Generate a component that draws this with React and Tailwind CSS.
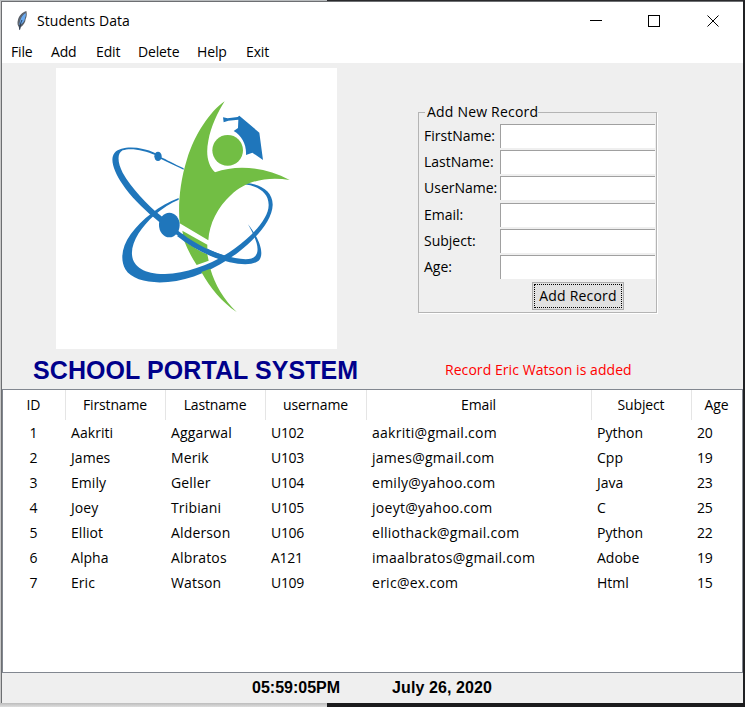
import React from 'react';

const menu = [
  ['File', 'w-[40px]'],
  ['Add', 'w-[45px]'],
  ['Edit', 'w-[42px]'],
  ['Delete', 'w-[59px]'],
  ['Help', 'w-[49px]'],
  ['Exit', 'w-[40px]'],
];
const fields = ['FirstName:', 'LastName:', 'UserName:', 'Email:', 'Subject:', 'Age:'];
const columns = ['ID', 'Firstname', 'Lastname', 'username', 'Email', 'Subject', 'Age'];
const rows = [
  ['1', 'Aakriti', 'Aggarwal', 'U102', 'aakriti@gmail.com', 'Python', '20'],
  ['2', 'James', 'Merik', 'U103', 'james@gmail.com', 'Cpp', '19'],
  ['3', 'Emily', 'Geller', 'U104', 'emily@yahoo.com', 'Java', '23'],
  ['4', 'Joey', 'Tribiani', 'U105', 'joeyt@yahoo.com', 'C', '25'],
  ['5', 'Elliot', 'Alderson', 'U106', 'elliothack@gmail.com', 'Python', '22'],
  ['6', 'Alpha', 'Albratos', 'A121', 'imaalbratos@gmail.com', 'Adobe', '19'],
  ['7', 'Eric', 'Watson', 'U109', 'eric@ex.com', 'Html', '15'],
];
const grid = 'grid grid-cols-[62px_100px_100px_101px_225px_100px_51px]';
const cell = [
  'pr-[1px] text-center',
  'pl-[6px] tracking-[0.05px]',
  'pl-[6px] tracking-[0.15px]',
  'pl-[6px] tracking-[-0.3px]',
  'pl-[6px] tracking-[0.27px]',
  'pl-[6px] tracking-[0px]',
  'pl-[6px] tracking-[-0.3px]',
];

function Feather() {
  return (
    <svg className="h-[20px] w-[12px]" viewBox="0 0 36 60">
      <path d="M31 1 C20 3 10 13 6 26 C3 35 5 43 8 47 L11 58 L14 49 C23 42 28 34 29 24 C33 17 33 8 31 1Z" fill="#555d67" />
      <path d="M29 6 C19 11 12 24 10 42 C20 38 27 28 27 20 C30 15 30 11 29 6Z" fill="#69a9ee" />
      <path d="M18 27 C14 35 12 42 11 56" stroke="#1a2b44" strokeWidth="2.5" fill="none" />
      <path d="M31 2 C18 9 9 23 7 42" stroke="#6b7078" strokeWidth="2" fill="none" />
    </svg>
  );
}

function Logo() {
  return (
    <svg className="h-[281px] w-[281px] bg-white" viewBox="-133 -67 843 843">
      {/* upper orbit */}
      <path fill="#1f76bb" fillRule="evenodd" d="M250 234 C220 220 197 207 181 200 L164 188 C120 168 65 165 43 187 C27 206 41 243 66 281 C89 316 128 355 160 381 L190 406 L229 433 C277 471 337 503 388 516 C429 525 463 524 477 509 C492 488 478 446 443 402 C466 442 481 478 465 497 C451 514 408 505 371 495 C318 479 264 445 231 420 L180 375 C141 344 92 292 67 247 C52 217 49 190 67 180 C91 171 133 180 165 194 L182 206 C208 218 230 229 250 238Z" />
      {/* lower orbit */}
      <path fill="#1f76bb" fillRule="evenodd" d="M235 323 C178 344 124 387 91 432 C64 469 59 508 75 537 C94 569 148 580 203 575 C273 570 353 533 416 484 C471 441 516 388 517 344 C518 304 483 281 435 277 L431 282 C472 286 505 306 505 344 C505 385 457 435 402 475 C344 518 264 549 194 551 C136 552 98 531 95 493 C92 455 123 409 163 374 C187 353 211 337 235 328Z" />
      <ellipse cx="173" cy="198" rx="11" ry="14" fill="#1f76bb" />
      {/* figure */}
      <path fill="#72be44" d="M373 33 C330 62 283 131 260 207 C238 276 233 347 238 399 L324 450 C327 400 352 350 392 314 C436 271 503 257 568 269 C495 231 413 221 344 246 C322 225 316 191 324 151 C332 108 352 66 373 33Z" />
      <path fill="#72be44" d="M246 421 L321 463 L321 489 C299 481 271 467 252 453Z" />
      <path fill="#72be44" d="M252 453 C275 469 298 483 321 492 L325 511 L289 524 C274 501 261 477 252 453Z" />
      <path fill="#72be44" d="M303 545 L330 535 C344 583 370 627 409 665 C365 636 329 592 303 545Z" />
      <path fill="#1f76bb" d="M247 431 C289 464 345 490 388 500 L372 511 C318 496 270 468 230 437Z" />
      <circle cx="382" cy="180" r="46" fill="#72be44" />
      <ellipse cx="207" cy="404" rx="31" ry="37" fill="#1f76bb" />
      {/* graduation cap */}
      <path fill="#1f76bb" d="M368 81 L382 84 L412 80 L417 76 L477 127 L488 209 L456 187 L437 194 C439 164 425 136 400 122 L413 113 L414 88 L384 91 L370 96Z" />
    </svg>
  );
}

export default function App() {
  return (
    <div className="flex h-[707px] w-[745px] flex-col overflow-hidden bg-[#1b1b1d] font-['Open_Sans','Noto_Sans',sans-serif] text-[14px] leading-[20px] tracking-[-0.15px] text-black">
      <div className="flex h-px shrink-0">
        <div className="w-[327px] bg-[#b9bcbe]" />
        <div className="flex-1 bg-[#29292c]" />
      </div>
      <div className="flex h-[702px] shrink-0">
        <div className="w-px bg-[#c9c9c9]" />
        <div className="flex w-[742px] flex-col border-l border-t border-[#6d6f72] bg-[#efefef]">
          <header className="flex h-[38px] shrink-0 items-center bg-white pl-[14px]">
            <Feather />
            <span className="ml-[9px] flex-1 tracking-[0.05px]">Students Data</span>
            <svg className="mr-[22px] h-[14px] w-[132px]" viewBox="0 0 132 14" fill="none" stroke="#000">
              <path d="M1 6.5H13 M59.5 1.5H70.5V12.5H59.5Z" shapeRendering="crispEdges" />
              <path d="M118.5 1.5L129.5 12.5M129.5 1.5L118.5 12.5" />
            </svg>
          </header>
          <nav className="flex h-[23px] shrink-0 items-center bg-white pl-[9px]">
            {menu.map(([name, w]) => (
              <span key={name} className={w}>{name}</span>
            ))}
          </nav>

          <main className="flex h-[326px] shrink-0">
            <section className="flex w-[388px] flex-col pt-[5px]">
              <div className="pl-[54px]"><Logo /></div>
              <h1 className="pl-[31px] pt-[6px] font-['Liberation_Sans',Arial,sans-serif] text-[25px] font-bold leading-[30px] tracking-[0.08px] whitespace-nowrap text-[#00008b]">SCHOOL PORTAL SYSTEM</h1>
            </section>
            <section className="flex flex-1 flex-col pl-[28px] pt-[40px]">
              <fieldset className="h-[210px] w-[239px] border border-[#b4b4b4] shadow-[1px_1px_0_#fff]">
                <legend className="ml-[6px] h-[18px] pl-[2px] leading-[18px] tracking-[0.2px]">Add New Record</legend>
                <div className="flex flex-col pt-[2px] tracking-[0px]">
                  {fields.map((f) => (
                    <label key={f} className="flex h-[26.2px] items-center pl-[5px]">
                      <span className="w-[76px]">{f}</span>
                      <input className="h-[24px] w-[155px] border-l border-t border-[#a0a0a0] bg-white outline-none" />
                    </label>
                  ))}
                </div>
                <button className="ml-[113px] mt-[2px] flex h-[28px] w-[92px] items-center justify-center border border-[#adadad] bg-[#e1e1e1] p-px tracking-[0.2px]">
                  <span className="flex h-full w-full items-center justify-center border border-dotted border-black whitespace-nowrap">Add Record</span>
                </button>
              </fieldset>
              <p className="mt-[47px] pl-[27px] tracking-[0.06px] text-[#ff0000]">Record Eric Watson is added</p>
            </section>
          </main>

          <div className="h-[284px] w-[741px] shrink-0 border border-[#828790] bg-white">
            <div className={grid + ' h-[30px]'}>
              {columns.map((c, i) => (
                <div key={c} className={'h-[30px] pr-px pt-[5px] text-center ' + (i ? 'border-l border-[#e5e5e5]' : '')}>{c}</div>
              ))}
            </div>
            {rows.map((r) => (
              <div key={r[0]} className={grid + ' h-[25px] items-center'}>
                {r.map((v, i) => (
                  <div key={i} className={cell[i]}>{v}</div>
                ))}
              </div>
            ))}
          </div>

          <footer className="flex flex-1 items-center gap-[52px] pl-[250px] font-['Liberation_Sans',Arial,sans-serif] text-[16px] font-bold">
            <span className="tracking-[0px]">05:59:05PM</span>
            <span className="tracking-[0.1px]">July 26, 2020</span>
          </footer>
        </div>
        <div className="flex-1 bg-[#202124]" />
      </div>
      <div className="flex flex-1">
        <div className="w-[327px] bg-linear-to-b from-[#bcbcbc] to-[#dedede]" />
        <div className="flex-1 bg-[#1b1b1d]" />
      </div>
    </div>
  );
}
